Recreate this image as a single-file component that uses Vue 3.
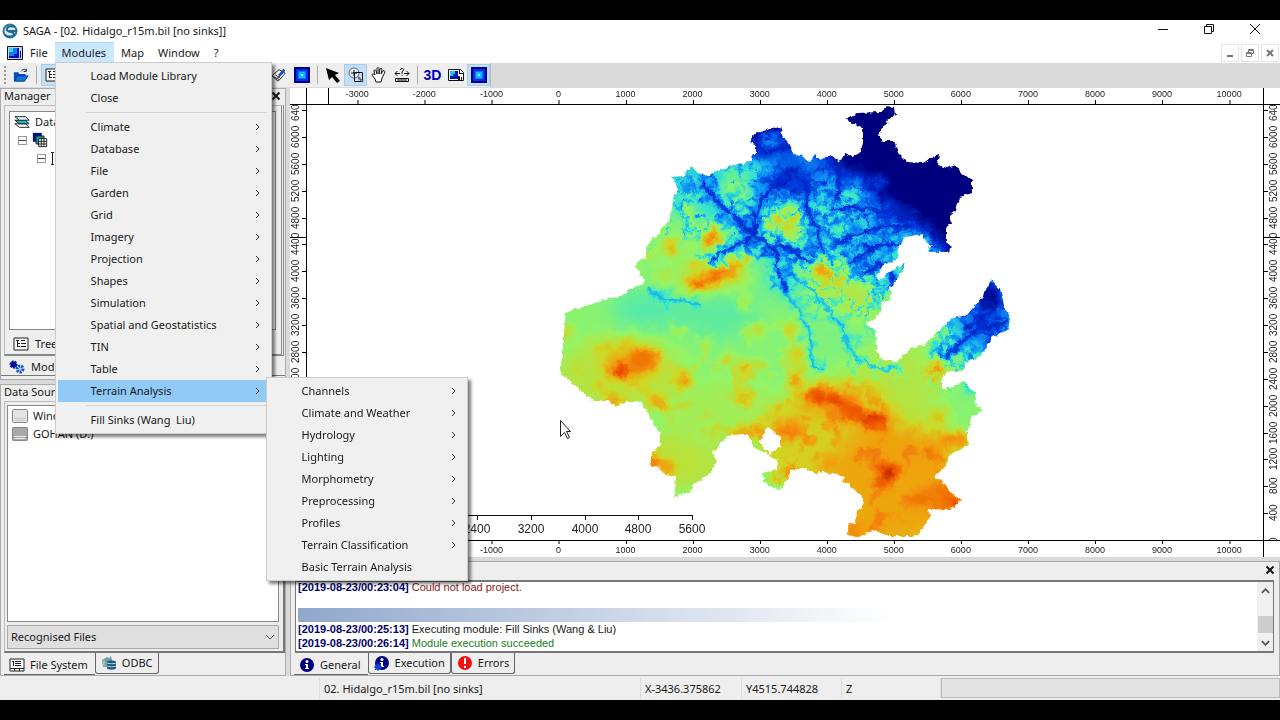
<template>
    <div class="screen">
        <svg class="defs" aria-hidden="true">
            <symbol id="grid-icon" viewBox="0 0 16 16">
                <path fill="#000080" d="M0 0h16v16H0z" />
                <path fill="#0030f0" d="M2 2h12v12H2z" />
                <path fill="#0878ff" d="M4 4h8v8H4z" />
                <path fill="#18b8ff" d="M5 5h6v6H5z" />
                <path fill="#90f0ff" d="M7 7h2v2H7z" />
            </symbol>
            <symbol id="map-icon" viewBox="0 0 16 14">
                <path fill="#c8d8e4" stroke="#101018" d="M.5.5h15v13H.5z" />
                <path fill="#0010c0" d="M2 2h10v10H2z" />
                <path fill="#1080f0" d="M2 2h8v6H7v2H2z" />
                <path fill="#40d0f0" d="M2 2h4v4H2z" />
                <path fill="#001090" d="M13 5h1v7h-1z" />
            </symbol>
            <symbol id="tree-icon" viewBox="0 0 16 14">
                <path fill="#f8f8f8" stroke="#202020" d="M1 1h14v12H1z" />
                <path fill="none" stroke="#202020" d="M3 3.5h3M4.500 4v6M5 6.500h2M5 9.500h2M8 3.500h4M8 6.500h5M8 9.500h5" />
            </symbol>
            <symbol id="file-icon" viewBox="0 0 16 14">
                <path fill="#fff" stroke="#202020" d="M1 1h14v12H1z" />
                <path fill="none" stroke="#202020" d="M3 3.500h2M6 3.500h6M4.500 4v4M6 5.500h6M6 7.500h6M1 10.500h14M5.500 10v3M10.500 10v3" />
            </symbol>
            <symbol id="info-icon" viewBox="0 0 16 16">
                <circle cx="8" cy="8" r="7" fill="#000080" />
                <circle cx="8" cy="4.500" r="1.500" fill="#fff" />
                <path fill="#fff" d="M6 7h3v4h1v1H6v-1h1V8H6z" />
            </symbol>
            <symbol id="close-icon" viewBox="0 0 10 10">
                <path fill="none" stroke="currentColor" stroke-width="2" d="M1.500 1.500l7 7M8.500 1.500l-7 7" />
            </symbol>
        </svg>

        <main class="window">
            <header class="title-bar">
                <svg class="logo" viewBox="0 0 16 16">
                    <circle cx="8" cy="8" r="6.500" fill="#d8ecf4" stroke="#2878a0" stroke-width="2" />
                    <path fill="none" stroke="#1c6890" stroke-width="2" d="M13 4C9 2 4 4 5 7s7 1 7 4-6 3-9 1M7 8h8" />
                </svg>
                <h1>SAGA - [02. Hidalgo_r15m.bil [no sinks]]</h1>
                <div class="window-buttons">
                    <button aria-label="Minimize">
                        <svg viewBox="0 0 12 12"><path d="M1 6.500h10" /></svg>
                    </button>
                    <button aria-label="Restore">
                        <svg viewBox="0 0 12 12"><path d="M1.500 3.500h7v7h-7zM3.500 3.500v-2h7v7h-2" /></svg>
                    </button>
                    <button aria-label="Close">
                        <svg viewBox="0 0 12 12"><path d="M1 1l10 10M11 1L1 11" /></svg>
                    </button>
                </div>
            </header>

            <nav class="menu-bar">
                <svg class="map-icon"><use href="#map-icon" /></svg>
                <div v-for="name in menus" :key="name" class="menu-entry">
                    <button class="menu-button" :class="{ open: openMenu === name }" @click="toggle(name)">
                        {{ name }}
                    </button>
                    <div v-if="name === 'Modules' && openMenu === name" class="menu modules-menu">
                        <template v-for="(item, i) in moduleItems" :key="i">
                            <hr v-if="item === '-'" />
                            <div v-else class="menu-row">
                                <button class="menu-item" :class="{ active: item === 'Terrain Analysis' }">
                                    {{ item }}
                                    <svg v-if="!plain.includes(item)" class="arrow" viewBox="0 0 6 8">
                                        <path d="M1 1l3 3-3 3" />
                                    </svg>
                                </button>
                                <div v-if="item === 'Terrain Analysis'" class="menu terrain-menu">
                                    <button v-for="sub in terrainItems" :key="sub" class="menu-item">
                                        {{ sub }}
                                        <svg v-if="!plain.includes(sub)" class="arrow" viewBox="0 0 6 8">
                                            <path d="M1 1l3 3-3 3" />
                                        </svg>
                                    </button>
                                </div>
                            </div>
                        </template>
                    </div>
                </div>
                <div class="mdi-buttons">
                    <button aria-label="Minimize map">
                        <svg viewBox="0 0 10 10"><path d="M2 8h6" /></svg>
                    </button>
                    <button aria-label="Restore map">
                        <svg viewBox="0 0 10 10"><path class="thin" d="M1.500 4.500h5v4h-5zM3.500 4V1.500h5v4H7M3 2.500h6M1 5.500h6" /></svg>
                    </button>
                    <button aria-label="Close map">
                        <svg viewBox="0 0 10 10"><path d="M2 2l6 6M8 2L2 8" /></svg>
                    </button>
                </div>
            </nav>

            <div class="toolbar">
                <div class="tools">
                    <span class="grip"></span>
                    <button aria-label="Open">
                        <svg viewBox="0 0 18 16">
                            <path fill="#0050b8" d="M1 5h5l1 2h7v2H5l-3 6H1z" />
                            <path fill="#1870e0" stroke="#003888" d="M5 9h12l-4 6H2z" />
                            <path fill="none" stroke="#102050" d="M9 4c2-3 4-3 6-1m0-2v3h-3" />
                        </svg>
                    </button>
                    <span class="divider"></span>
                    <button class="pressed" aria-label="Show manager">
                        <svg viewBox="0 0 16 14"><use href="#tree-icon" /></svg>
                    </button>
                    <span class="hidden-tools"></span>
                    <button aria-label="Edit">
                        <svg viewBox="0 0 18 16">
                            <path fill="#fff" stroke="#111" d="M1 9l8-7 7 4-8 9z" />
                            <path fill="none" stroke="#111" d="M3 10l6 3M5 8l5 3M6 13l9-9" />
                            <path fill="none" stroke="#2050c0" stroke-width="3" d="M15 2L9 9" />
                        </svg>
                    </button>
                    <button aria-label="Grid"><svg viewBox="0 0 16 16"><use href="#grid-icon" /></svg></button>
                    <span class="divider wide"></span>
                    <button aria-label="Pointer">
                        <svg viewBox="0 0 16 16"><path d="M1 1l3 12 3-3 5 6 3-2-5-6 4-2z" /></svg>
                    </button>
                    <button class="pressed" aria-label="Zoom">
                        <svg viewBox="0 0 16 16">
                            <circle cx="6" cy="6" r="5" fill="#e4f2fb" stroke="#667" />
                            <path fill="none" stroke="#111" d="M6 3v6M3 6h6M6.500 5.500h8v9h-8z" />
                            <path stroke="#667" stroke-width="2" d="M10 10l5 5" />
                        </svg>
                    </button>
                    <button aria-label="Pan">
                        <svg viewBox="0 0 16 16">
                            <path fill="#fff" stroke="#111" d="M5 15l-1-3-3-4c0-2 2-1 3 0L3 4c0-2 2-1 2 0l1 3V2c0-2 2-2 2 0v5l1-5c1-1 2-1 2 1l-1 4 2-3c1-1 2 0 2 1l-3 6-1 4z" />
                        </svg>
                    </button>
                    <button aria-label="Measure">
                        <svg viewBox="0 0 16 16">
                            <path fill="none" stroke="#111" d="M1 6.500h5M3.500 4L1 6.500 3.500 9M10 6.500h5M12.500 4L15 6.500 12.500 9M6.500 3c0-2 4-2 3 0L8 5v2M8 8v1M1.500 11.500h13v3h-13zM4 12v2M6 12v2M8 12v2M10 12v2M12 12v2" />
                        </svg>
                    </button>
                    <span class="divider wide"></span>
                    <button class="three-d">3D</button>
                    <button aria-label="Layout">
                        <svg viewBox="0 0 16 16">
                            <path fill="#fff" stroke="#111" d="M.5 2.500h12l3 3v8H.5z" />
                            <path fill="#0018c0" d="M2 4h8v8H2z" />
                            <path fill="#20c8e8" d="M2 4h5v3H5v2H2z" />
                            <path fill="#111" d="M11 3v4h4V6h-3V3zM10 9h2v4h-2zM13 10h1v3h-1z" />
                        </svg>
                    </button>
                    <button class="pressed" aria-label="Show map"><svg viewBox="0 0 16 16"><use href="#grid-icon" /></svg></button>
                </div>
            </div>

            <div class="workspace">
                <aside class="sidebar">
                    <section class="panel manager">
                        <h2>Manager <button aria-label="Close manager"><svg><use href="#close-icon" /></svg></button></h2>
                        <div class="frame">
                            <div class="tree">
                                <div class="tree-row">
                                    <svg viewBox="0 0 18 16">
                                        <path fill="#fff" stroke="#111" d="M1 10h12l4 4H6z" />
                                        <path fill="#20b8d0" stroke="#111" d="M1 6h12l4 4H6z" />
                                        <path fill="#d8f8ff" stroke="#111" d="M1 2h12l4 4H6z" />
                                    </svg>
                                    Data
                                </div>
                                <div class="tree-row second">
                                    <span class="toggle"></span>
                                    <svg viewBox="0 0 18 16">
                                        <path fill="#001088" d="M1 0h10v10H1z" />
                                        <path fill="#209898" stroke="#023" d="M4.500 3.500h9v9h-9z" />
                                        <path fill="#fff" stroke="#111" d="M7.500 6.500h9v9h-9zM10.500 6v9M13.500 6v9M7 9.500h9M7 12.500h9" />
                                    </svg>
                                </div>
                                <div class="tree-row third"><span class="toggle"></span><span class="stem"></span></div>
                            </div>
                            <button class="inner-tab"><svg><use href="#tree-icon" /></svg>Tree</button>
                        </div>
                        <button class="inner-tab modules-tab">
                            <svg viewBox="0 0 16 14">
                                <circle cx="4.500" cy="4.500" r="3" fill="#0010a0" stroke="#0010a0" stroke-width="2" stroke-dasharray="2 1" />
                                <circle cx="11" cy="9" r="3" fill="#a8d0f8" stroke="#1850b8" stroke-width="3" stroke-dasharray="2 1" />
                            </svg>
                            Modules
                        </button>
                    </section>

                    <section class="panel source">
                        <h2>Data Source</h2>
                        <div class="frame">
                            <div class="drives">
                                <div v-for="drive in drives" :key="drive.name" class="drive">
                                    <svg viewBox="0 0 16 14">
                                        <rect x=".5" y=".5" width="15" height="13" rx="1" :fill="drive.fill" stroke="#858585" />
                                        <path :stroke="drive.line" d="M2 9.500h12M3 11.500h10" />
                                    </svg>
                                    {{ drive.name }}
                                </div>
                            </div>
                            <div class="select-box">
                                <select aria-label="File filter"><option>Recognised Files</option></select>
                                <svg viewBox="0 0 10 6"><path d="M1 1l4 4 4-4" /></svg>
                            </div>
                        </div>
                        <div class="tabs">
                            <button class="tab current"><svg><use href="#file-icon" /></svg>File System</button>
                            <button class="tab">
                                <svg viewBox="0 0 16 14">
                                    <path fill="#70a0a8" d="M1 4l5-3 2 1 2-2 1 4v7H2z" />
                                    <path fill="#185878" d="M6 6c0-2 9-2 9 0v6c0 2-9 2-9 0z" />
                                    <path fill="none" stroke="#b8d8e8" d="M6 7c2 1 7 1 9 0M6 10c2 1 7 1 9 0M3 4v6" />
                                </svg>
                                ODBC
                            </button>
                        </div>
                    </section>
                </aside>

                <div class="content">
                    <section class="map">
                        <div v-for="side in ['top', 'bottom']" :key="side" class="ruler-x" :class="side">
                            <span v-for="t in xTicks" :key="t.label" class="tick" :style="{ left: t.pos + '%' }">{{ t.label }}</span>
                            <span v-if="side === 'top'" class="marker-x" :style="{ left: cursor.x + '%' }"></span>
                        </div>
                        <div v-for="side in ['left', 'right']" :key="side" class="ruler-y" :class="side">
                            <span v-for="t in yTicks" :key="t.label" class="tick" :style="{ top: t.pos + '%' }"><b>{{ t.label }}</b></span>
                            <span class="marker-y" :style="{ top: cursor.y + '%' }"></span>
                        </div>
                        <svg class="terrain" viewBox="307 105 956 435">
                            <defs>
                                <clipPath id="outline"><path :d="outline" clip-rule="evenodd" /></clipPath>
                                <filter id="soft" x="-50%" y="-50%" width="200%" height="200%" color-interpolation-filters="sRGB">
                                    <feGaussianBlur stdDeviation="9" />
                                </filter>
                                <filter id="spot" x="-50%" y="-50%" width="200%" height="200%" color-interpolation-filters="sRGB">
                                    <feGaussianBlur stdDeviation="4" />
                                </filter>
                                <filter id="river" x="-20%" y="-20%" width="140%" height="140%" color-interpolation-filters="sRGB">
                                    <feGaussianBlur stdDeviation=".9" />
                                </filter>
                                <filter id="rough" filterUnits="userSpaceOnUse" x="540" y="100" width="490" height="445">
                                    <feTurbulence type="fractalNoise" baseFrequency=".22" numOctaves="2" seed="8" result="n" />
                                    <feDisplacementMap in="SourceGraphic" in2="n" scale="5" xChannelSelector="R" yChannelSelector="G" />
                                </filter>
                                <!-- valleys: creases of the turbulence become dark lines -->
                                <filter id="valleys" x="0" y="0" width="100%" height="100%" color-interpolation-filters="sRGB">
                                    <feTurbulence type="turbulence" baseFrequency=".06" numOctaves="3" seed="14" />
                                    <feColorMatrix values="0 0 0 0 0  0 0 0 0 0  0 0 0 0 0  -2 0 0 0 .5" />
                                </filter>
                                <filter id="hills" x="0" y="0" width="100%" height="100%" color-interpolation-filters="sRGB">
                                    <feTurbulence type="fractalNoise" baseFrequency=".045" numOctaves="5" seed="5" />
                                    <feColorMatrix values="0 0 0 0 .85  0 0 0 0 .85  0 0 0 0 .85  5 0 0 0 -2.700" />
                                </filter>
                                <!-- grey height to colour ramp -->
                                <filter id="ramp" filterUnits="userSpaceOnUse" x="540" y="100" width="490" height="445" color-interpolation-filters="sRGB">
                                    <feTurbulence type="fractalNoise" baseFrequency=".08" numOctaves="3" seed="3" result="n" />
                                    <feDisplacementMap in="SourceGraphic" in2="n" scale="12" xChannelSelector="R" yChannelSelector="G" />
                                    <feComponentTransfer>
                                        <feFuncR type="table" tableValues="0 0 .05 .22 .58 .82 .95 .94 .7" />
                                        <feFuncG type="table" tableValues="0 .2 .6 .9 .96 .84 .62 .34 .08" />
                                        <feFuncB type="table" tableValues=".5 .85 .98 .8 .4 .14 .05 0 0" />
                                    </feComponentTransfer>
                                </filter>
                                <mask id="north" maskUnits="userSpaceOnUse" x="500" y="60" width="560" height="520">
                                    <g filter="url(#soft)" fill="#fff">
                                        <path d="M650 100h340v160l-90 50-20 20-70-20-50-50-40-20-80 10z" />
                                        <path d="M930 390v-70l50-70 50 70-40 70z" />
                                    </g>
                                </mask>
                                <mask id="south" maskUnits="userSpaceOnUse" x="500" y="60" width="560" height="520">
                                    <g filter="url(#soft)" fill="#fff">
                                        <path d="M770 375l60-10 120 70 30 120H830l-70-80-60-20z" />
                                        <path fill="#777" d="M650 330h140v110h-140zM640 200h90v80h-90zM580 340h70v60h-70z" />
                                    </g>
                                </mask>
                            </defs>
                            <g filter="url(#rough)">
                                <g clip-path="url(#outline)">
                                    <g filter="url(#ramp)">
                                        <rect x="500" y="60" width="560" height="520" fill="#7c7c7c" />
                                        <g filter="url(#soft)">
                                            <ellipse v-for="(a, i) in areas" :key="i" :cx="a[0]" :cy="a[1]" :rx="a[2]" :ry="a[3]" :fill="grey(a[4])" />
                                            <path fill="#000" d="M738 110h58v42l30 8 15 17 25-2-5 20 25 5 5 22 30 8 20 30h60V80H830v65l-30 10-60 5z" />
                                        </g>
                                        <g filter="url(#spot)">
                                            <path v-for="r in deepRivers" :key="r.d" class="flood" :d="r.d" />
                                            <ellipse v-for="(s, i) in spots" :key="i" :cx="s[0]" :cy="s[1]" :rx="s[2]" :ry="s[3]" :fill="grey(s[4])" />
                                        </g>
                                        <rect x="540" y="100" width="490" height="445" filter="url(#hills)" mask="url(#south)" opacity=".6" />
                                        <rect x="540" y="100" width="490" height="445" filter="url(#valleys)" mask="url(#north)" />
                                        <g class="rivers" filter="url(#river)">
                                            <template v-for="r in rivers" :key="r.d">
                                                <path :d="r.d" />
                                                <path class="side" :d="r.sides" />
                                            </template>
                                        </g>
                                        <g class="rivers deep" filter="url(#river)">
                                            <template v-for="r in deepRivers" :key="r.d">
                                                <path :d="r.d" />
                                                <path class="side" :d="r.sides" />
                                            </template>
                                        </g>
                                    </g>
                                </g>
                            </g>
                            <g class="scale">
                                <path d="M307 515.500h385.500M477.500 515v5M531.500 515v5M585.500 515v5M638.500 515v5M692.500 515v5" />
                                <text v-for="s in scale" :key="s[1]" :x="s[0]" y="533">{{ s[1] }}</text>
                            </g>
                            <path class="pointer" d="M560.500 420.500v16l4-4 3 6 2-1-3-6h4z" />
                        </svg>
                    </section>

                    <section class="panel messages">
                        <h2><button aria-label="Close messages"><svg><use href="#close-icon" /></svg></button></h2>
                        <div class="log">
                            <div class="lines">
                                <p><b>[2019-08-23/00:23:04]</b> <span class="error">Could not load project.</span></p>
                                <div class="band"></div>
                                <p><b>[2019-08-23/00:25:13]</b> Executing module: Fill Sinks (Wang &amp; Liu)</p>
                                <p><b>[2019-08-23/00:26:14]</b> <span class="success">Module execution succeeded</span></p>
                            </div>
                            <div class="scrollbar">
                                <svg viewBox="0 0 10 6"><path d="M1 5l4-4 4 4" /></svg>
                                <span class="thumb"></span>
                                <svg viewBox="0 0 10 6"><path d="M1 1l4 4 4-4" /></svg>
                            </div>
                        </div>
                        <div class="tabs">
                            <button class="tab current"><svg><use href="#info-icon" /></svg>General</button>
                            <button class="tab">
                                <svg viewBox="0 0 16 16">
                                    <use href="#info-icon" />
                                    <circle cx="4" cy="12" r="2" fill="#d0e8ff" stroke="#1040d0" stroke-width="2" />
                                    <path stroke="#1040d0" d="M4 8v8M0 12h8M1 9l6 6M7 9l-6 6" />
                                </svg>
                                Execution
                            </button>
                            <button class="tab">
                                <svg viewBox="0 0 16 16">
                                    <circle cx="8" cy="8" r="7" fill="#f01010" />
                                    <path fill="#fff" d="M7 3h2v6H7zM7 11h2v2H7z" />
                                </svg>
                                Errors
                            </button>
                        </div>
                    </section>
                </div>
            </div>

            <footer class="status-bar">
                <span></span>
                <span>02. Hidalgo_r15m.bil [no sinks]</span>
                <span>X-3436.375862</span>
                <span>Y4515.744828</span>
                <span>Z</span>
                <span class="progress"></span>
            </footer>
        </main>
    </div>
</template>
<script setup>
import { ref } from 'vue';

const menus = ['File', 'Modules', 'Map', 'Window', '?'];
const openMenu = ref('Modules');

const moduleItems = [
    'Load Module Library', 'Close', '-',
    'Climate', 'Database', 'File', 'Garden', 'Grid', 'Imagery', 'Projection', 'Shapes',
    'Simulation', 'Spatial and Geostatistics', 'TIN', 'Table', 'Terrain Analysis', '-',
    'Fill Sinks (Wang  Liu)',
];
const terrainItems = [
    'Channels', 'Climate and Weather', 'Hydrology', 'Lighting', 'Morphometry',
    'Preprocessing', 'Profiles', 'Terrain Classification', 'Basic Terrain Analysis',
];
// entries without a submenu
const plain = ['Load Module Library', 'Close', 'Fill Sinks (Wang  Liu)', 'Basic Terrain Analysis'];

const drives = [
    { name: 'Windows (C:)', fill: '#e4e4e4', line: '#c8c8c8' },
    { name: 'GOHAN (D:)', fill: '#a8a8a8', line: '#eeeeee' },
];

function toggle(name) {
    openMenu.value = openMenu.value === name ? '' : name;
}

// rulers, in percent of the map extent
const extent = { left: -3750, right: 10505, bottom: 0, top: 6475 };
const xTicks = [];
for (let v = -3000; v <= 10000; v += 1000) {
    xTicks.push({ label: v, pos: ((v - extent.left) / (extent.right - extent.left)) * 100 });
}
const yTicks = [];
for (let v = 0; v <= 6400; v += 400) {
    yTicks.push({ label: v, pos: ((extent.top - v) / extent.top) * 100 });
}
const cursor = {
    x: ((-3436 - extent.left) / (extent.right - extent.left)) * 100,
    y: ((extent.top - 4515) / extent.top) * 100,
};

const scale = [[477, 2400], [531, 3200], [585, 4000], [638, 4800], [692, 5600]];

const outline = `M566 312L592 304 612 297 618 298 630 289 645 283 641 275 635 267 637 262 645 259 647 247 652 239
658 235 662 227 668 222 672 212 673 198 678 190 675 182 671 177 683 176 687 170 692 166 698 172 707 176 723 169
737 164 750 162 755 153 755 145 750 143 755 133 763 131 780 127 783 137 789 143 795 155 802 156 810 162 815 155
820 160 830 155 840 162 845 153 852 156 860 153 863 143 863 129 855 124 845 119 857 113 880 112 887 106 894 107
895 115 888 120 878 135 883 141 894 141 898 153 907 162 923 163 932 157 940 155 938 165 947 168 956 165 962 174
972 180 972 193 960 197 956 210 950 215 952 223 946 227 946 242 952 247 947 252 930 252 928 248 933 247 925 240
923 234 905 237 898 247 897 260 883 265 877 277 879 281 890 272 905 263 903 270 897 279 890 287 891 299 882 303
880 315 866 323 875 332 877 352 883 360 897 362 912 347 923 346 933 337 947 323 953 318 967 315 982 297 991 280
1002 292 1004 307 1011 318 1008 330 993 337 980 357 965 363 963 371 947 371 941 380 943 389 953 387 963 381
975 393 977 407 983 410 972 417 967 433 968 447 950 454 945 467 933 478 943 480 950 492 961 500 950 510 928 509
930 517 917 536 890 536 880 533 876 530 867 533 858 538 847 535 847 525 856 523 857 510 863 508 863 498 847 483
842 483 845 477 823 472 815 473 803 468 790 470 788 478 780 491 763 482 763 473 777 469 778 460 753 447 750 437
743 434 727 436 713 453 716 460 712 472 693 485 690 492 674 497 676 477 665 475 658 467 651 465 652 452 660 445
660 433 643 406 642 402 627 402 615 407 610 401 593 401 577 388 563 375 560 377z
M768 427L780 437 780 447 770 454 763 447 760 440z`;

// cx, cy, rx, ry, height from 0 to 1
const areas = [
    [705, 190, 45, 35, 0.32], [740, 190, 30, 25, 0.36], [825, 205, 65, 60, 0.28], [770, 235, 40, 30, 0.38],
    [860, 260, 45, 35, 0.38], [790, 275, 40, 30, 0.44], [650, 310, 40, 20, 0.42], [720, 315, 40, 25, 0.43],
    [735, 195, 14, 24, 0.52], [785, 225, 24, 24, 0.56], [690, 255, 35, 38, 0.5], [715, 275, 35, 15, 0.6],
    [830, 280, 25, 20, 0.6], [860, 300, 20, 20, 0.56], [825, 335, 45, 22, 0.47], [620, 375, 65, 38, 0.57],
    [630, 362, 28, 20, 0.7], [680, 460, 40, 30, 0.58], [725, 415, 60, 35, 0.53], [820, 440, 60, 50, 0.64],
    [900, 375, 50, 30, 0.56], [915, 410, 25, 25, 0.56], [890, 490, 70, 60, 0.73], [830, 398, 35, 14, 0.76],
    [870, 418, 30, 14, 0.76], [985, 315, 35, 40, 0.22], [945, 350, 26, 18, 0.5], [910, 455, 45, 28, 0.74],
    [838, 212, 30, 26, 0.44], [850, 240, 32, 18, 0.42], [790, 180, 30, 16, 0.12], [690, 210, 10, 30, 0.48],
];
const spots = [
    [713, 237, 6, 14, 0.84], [671, 249, 9, 5, 0.8], [700, 284, 12, 5, 0.92], [716, 276, 8, 6, 0.9],
    [730, 270, 10, 6, 0.8], [742, 258, 5, 8, 0.8], [822, 266, 6, 8, 0.8], [830, 275, 7, 5, 0.76],
    [780, 222, 14, 8, 0.66], [790, 215, 12, 6, 0.64],
    [620, 371, 9, 8, 0.94], [642, 360, 13, 12, 0.82], [683, 380, 6, 10, 0.8], [745, 367, 9, 4, 0.78],
    [727, 360, 4, 5, 0.74], [740, 397, 10, 4, 0.7], [795, 380, 7, 10, 0.78], [820, 396, 14, 6, 0.92],
    [836, 402, 14, 6, 0.92], [853, 412, 12, 6, 0.9], [874, 420, 14, 7, 0.94], [788, 430, 18, 9, 0.8],
    [748, 432, 18, 6, 0.76], [655, 463, 8, 8, 0.84], [669, 468, 7, 7, 0.76], [888, 472, 10, 8, 0.98],
    [880, 485, 8, 4, 0.94], [951, 502, 12, 7, 1], [935, 370, 7, 9, 0.82], [935, 498, 18, 14, 0.8],
    [855, 530, 8, 8, 0.8], [915, 500, 12, 8, 0.82], [615, 402, 12, 5, 0.76], [955, 440, 18, 9, 0.78],
    [940, 417, 10, 6, 0.7], [658, 402, 8, 7, 0.74], [829, 461, 7, 6, 0.78], [566, 332, 5, 5, 0.72],
    [771, 140, 13, 7, 0.26], [750, 145, 3, 3, 0.34], [968, 387, 6, 6, 0.4], [850, 198, 10, 5, 0.42],
    [878, 182, 8, 4, 0.26], [792, 330, 4, 10, 0.74], [798, 355, 4, 12, 0.74], [990, 295, 10, 14, 0.03],
    [757, 330, 8, 4, 0.7], [745, 303, 3, 8, 0.68],
];

// a small fixed-seed generator keeps the drainage pattern the same on every load
let seed = 7;
function random() {
    seed = (seed * 16807) % 2147483647;
    return seed / 2147483647;
}

function tributary(x, y, angle, length, depth) {
    let d = `M${x.toFixed(1)} ${y.toFixed(1)}`;
    let more = '';
    let a = angle;
    const steps = Math.ceil(length / 3);
    for (let i = 0; i < steps; i++) {
        a += (random() - 0.5) * 0.7;
        x += Math.cos(a) * 3;
        y += Math.sin(a) * 3;
        d += `L${x.toFixed(1)} ${y.toFixed(1)}`;
        if (depth > 0 && i % 2 === 1) {
            const turn = i % 4 === 1 ? 0.8 : -0.8;
            more += tributary(x, y, a + turn, length * 0.4, depth - 1);
        }
    }
    return d + more;
}

// the points run from the mouth of a river to its source
function river(points, reach) {
    let sides = '';
    let side = 1;
    for (let i = 1; i < points.length; i++) {
        const [x0, y0] = points[i - 1];
        const [x1, y1] = points[i];
        const angle = Math.atan2(y1 - y0, x1 - x0);
        const count = Math.max(1, Math.round(Math.hypot(x1 - x0, y1 - y0) / 6));
        for (let k = 0; k < count; k++) {
            const f = (k + random()) / count;
            side = -side;
            sides += tributary(x0 + (x1 - x0) * f, y0 + (y1 - y0) * f, angle + side * 0.95, reach * (0.5 + random()), 1);
        }
    }
    return { d: 'M' + points.map((p) => p.join(' ')).join('L'), sides };
}

const rivers = [
    river([[787, 293], [803, 313], [808, 333], [811, 350], [813, 365], [822, 368]], 7),
    river([[785, 272], [807, 287], [827, 307], [843, 327], [850, 348], [868, 366], [885, 369], [900, 370]], 10),
    river([[645, 288], [660, 298], [680, 301], [700, 306]], 5),
];
const deepRivers = [
    river([[787, 293], [780, 267], [773, 247], [752, 235], [755, 215], [762, 195], [783, 180]], 15),
    river([[752, 233], [730, 213], [716, 200], [703, 182]], 13),
    river([[752, 237], [730, 250], [707, 263]], 10),
    river([[770, 246], [795, 250], [812, 262]], 10),
    river([[804, 175], [807, 207], [817, 233], [822, 253]], 15),
    river([[915, 212], [873, 210], [827, 208]], 12),
    river([[915, 226], [873, 228], [853, 235], [832, 245]], 12),
    river([[905, 243], [873, 247], [850, 264]], 13),
    river([[890, 290], [893, 275], [880, 262], [862, 272]], 8),
    river([[838, 165], [840, 187], [834, 198]], 10),
    river([[1008, 322], [977, 330], [962, 342], [946, 356]], 12),
    river([[998, 300], [985, 318], [966, 326]], 9),
];

function grey(v) {
    const n = Math.round(v * 255);
    return `rgb(${n}, ${n}, ${n})`;
}
</script>
<style>
body {
    margin: 0;
    background: #000;
}
</style>
<style scoped>
* {
    box-sizing: border-box;
}

.screen {
    min-height: 100vh;
    padding: 20px 0;
    display: flex;
    background: #000;
    color: #181818;
    font: 11px/16px 'Noto Sans', 'Open Sans', sans-serif;
}

.defs {
    position: absolute;
    width: 0;
    height: 0;
}

button {
    border: 0;
    padding: 0;
    background: none;
    color: inherit;
    font: inherit;
}

h1,
h2,
p {
    margin: 0;
    font: inherit;
}

.window {
    flex: 1;
    min-width: 0;
    display: flex;
    flex-direction: column;
    background: #fff;
}

.title-bar {
    height: 22px;
    display: flex;
    align-items: center;
    gap: 5px;
    padding-left: 2px;
}

.logo {
    width: 16px;
    height: 16px;
}

.window-buttons {
    display: flex;
    margin-left: auto;
    padding-right: 2px;
}

.window-buttons button {
    width: 46px;
    height: 20px;
}

.window-buttons svg {
    width: 12px;
    height: 12px;
    fill: none;
    stroke: #111;
}

.menu-bar {
    height: 21px;
    display: flex;
    align-items: center;
    padding-left: 7px;
}

.map-icon {
    width: 16px;
    height: 14px;
}

.menu-entry {
    position: relative;
}

.menu-button {
    height: 21px;
    padding: 0 7px;
    border: 1px solid transparent;
    border-width: 1px 0;
    white-space: nowrap;
}

.menu-button.open {
    padding: 0 8px 0 7px;
    background: #cce8ff;
    border-color: #a8d8f8;
}

.mdi-buttons {
    display: flex;
    gap: 2px;
    margin-left: auto;
    padding-right: 1px;
}

.mdi-buttons button {
    width: 18px;
    height: 18px;
    border: 1px solid #e4e4e4;
    display: grid;
    place-items: center;
}

.mdi-buttons svg {
    width: 10px;
    height: 10px;
    fill: none;
    stroke: #707880;
    stroke-width: 2;
}

.mdi-buttons .thin {
    stroke-width: 1;
}

.menu {
    position: absolute;
    z-index: 2;
    padding: 2px;
    background: #f0f0f0;
    border: 1px solid #ccc;
    box-shadow: 3px 3px 3px rgba(0, 0, 0, 0.5);
}

.modules-menu {
    top: 20px;
    left: 0;
    width: 217px;
}

.terrain-menu {
    top: -3px;
    left: 208px;
    width: 202px;
}

.menu-row {
    position: relative;
}

.menu-item {
    width: 100%;
    height: 22px;
    display: flex;
    align-items: center;
    justify-content: space-between;
    padding: 0 8px 0 33px;
    white-space: pre;
}

.menu-item.active {
    background: #91c9f7;
}

.menu hr {
    height: 1px;
    margin: 3px 2px 3px 28px;
    border: 0;
    background: #d4d4d4;
}

.arrow {
    width: 6px;
    height: 8px;
    fill: none;
    stroke: #333;
}

.toolbar {
    height: 25px;
    background: #dadada;
}

.tools {
    width: 491px;
    height: 24px;
    display: flex;
    align-items: center;
    background: #eee;
    border-right: 1px solid #bbb;
}

.tools button {
    width: 23px;
    height: 22px;
    display: grid;
    place-items: center;
}

.tools button.pressed {
    background: #c4dff5;
    outline: 1px solid #a4cdf0;
    outline-offset: -1px;
}

.tools svg {
    width: 16px;
    height: 16px;
}

.grip {
    width: 9px;
    height: 18px;
    border-left: 4px solid #eee;
    background: repeating-linear-gradient(#999 0 2px, #eee 2px 4px);
    border-right: 3px solid #eee;
}

.divider {
    width: 1px;
    height: 18px;
    margin: 0 4px;
    background: #aaa;
}

.divider.wide {
    margin: 0 3px 0 4px;
}

.hidden-tools {
    flex: 1;
}

.tools .three-d {
    color: #0000c0;
    font: bold 14px/16px 'Liberation Sans', sans-serif;
}

.workspace {
    flex: 1;
    display: flex;
    background: #dadada;
}

.sidebar {
    width: 286px;
    display: flex;
    flex-direction: column;
    gap: 4px;
}

.panel {
    display: flex;
    flex-direction: column;
    background: #eee;
    border: 1px solid #aaa;
}

.panel h2 {
    height: 13px;
    display: flex;
    justify-content: space-between;
    align-items: center;
    padding: 0 4px 0 3px;
}

.panel h2 button {
    width: 10px;
    height: 13px;
    margin-left: auto;
    display: flex;
    align-items: center;
}

.panel h2 svg {
    width: 10px;
    height: 10px;
}

.manager {
    height: 292px;
}

.manager .frame {
    flex: 1;
    display: flex;
    flex-direction: column;
    margin: 3px 1px 0 3px;
    padding: 5px 5px 0 4px;
    border: 1px solid #bbb;
    border-right: 3px double #888;
    border-bottom: 2px solid #888;
}

.tree {
    flex: 1;
    padding: 1px 4px;
    background: #fff;
    border: 1px solid #888;
}

.tree-row {
    height: 18px;
    display: flex;
    align-items: center;
    gap: 5px;
}

.tree-row svg {
    width: 16px;
    height: 16px;
}

.second {
    padding-left: 4px;
}

.third {
    padding-left: 23px;
}

.toggle {
    width: 9px;
    height: 9px;
    border: 1px solid #999;
    background: linear-gradient(#0000 3px, #345 3px 4px, #0000 4px);
}

.stem {
    width: 3px;
    height: 13px;
    border: 1px solid #222;
    border-width: 1px 0;
    background: linear-gradient(90deg, #0000 1px, #222 1px 2px, #0000 2px);
}

.inner-tab {
    height: 24px;
    display: flex;
    align-items: center;
    gap: 6px;
    padding: 4px 0 0 4px;
    text-align: left;
}

.inner-tab svg {
    width: 16px;
    height: 14px;
}

.modules-tab {
    height: 20px;
    padding: 2px 0 0 8px;
    margin-bottom: 3px;
    border-bottom: 1px solid #777;
}

.source {
    flex: 1;
}

.source .frame {
    flex: 1;
    display: flex;
    flex-direction: column;
    gap: 3px;
    margin: 3px 0 0 3px;
    padding: 3px 4px 2px 2px;
    border: 1px solid #bbb;
    border-right: 2px solid #777;
    border-bottom: 2px solid #777;
}

.drives {
    flex: 1;
    padding: 1px 4px;
    background: #fff;
    border: 1px solid #888;
}

.drive {
    height: 18px;
    display: flex;
    align-items: center;
    gap: 5px;
}

.drive svg {
    width: 16px;
    height: 14px;
}

.select-box {
    position: relative;
}

.select-box select {
    appearance: none;
    width: 100%;
    height: 24px;
    padding: 0 3px;
    border: 1px solid #aaa;
    border-radius: 0;
    background: #dfdfdf;
    color: inherit;
    font: inherit;
}

.select-box svg {
    position: absolute;
    top: 9px;
    right: 4px;
    width: 10px;
    height: 6px;
    fill: none;
    stroke: #555;
    pointer-events: none;
}

.tabs {
    height: 22px;
    display: flex;
    align-items: flex-start;
    padding-left: 3px;
}

.tab {
    height: 21px;
    display: flex;
    align-items: center;
    gap: 5px;
    padding: 0 5px;
    border: 1px solid #666;
    border-top: 0;
    border-radius: 0 0 3px 3px;
    white-space: nowrap;
}

.tab.current {
    height: 22px;
    padding: 2px 7px 0 5px;
    border-width: 0 0 1px;
    border-radius: 0;
}

.tab svg {
    width: 16px;
    height: 14px;
}

.content {
    flex: 1;
    min-width: 0;
    display: flex;
    flex-direction: column;
    gap: 4px;
    margin-left: 4px;
}

.map {
    flex: 1;
    display: grid;
    grid-template-columns: 17px 1fr 17px;
    grid-template-rows: 17px 1fr 17px;
    background: #fff;
    overflow: hidden;
    color: #222;
    font: 9px/10px 'Liberation Sans', sans-serif;
}

/* axis lines run on through the corners */
.map::before,
.map::after {
    content: '';
    border: solid #000;
    pointer-events: none;
}

.map::before {
    grid-area: 1 / 2 / 4 / 3;
    margin: 0 -1px;
    border-width: 0 1px;
}

.map::after {
    grid-area: 2 / 1 / 3 / 4;
    margin: -1px 0;
    border-width: 1px 0;
}

.terrain {
    grid-area: 2 / 2;
    width: 100%;
    height: 100%;
    min-height: 0;
}

.ruler-x,
.ruler-y {
    position: relative;
}

.top {
    grid-area: 1 / 2;
}

.bottom {
    grid-area: 3 / 2;
}

.left {
    grid-area: 2 / 1;
    overflow: hidden;
}

.right {
    grid-area: 2 / 3;
    overflow: hidden;
}

.ruler-x .tick {
    position: absolute;
    transform: translateX(-50%);
}

.ruler-x .tick::after {
    content: '';
    position: absolute;
    left: 50%;
    width: 1px;
    height: 4px;
    background: #000;
}

.top .tick {
    bottom: 6px;
}

.top .tick::after {
    bottom: -5px;
}

.bottom .tick {
    top: 5px;
}

.bottom .tick::after {
    top: -5px;
}

.ruler-y .tick {
    position: absolute;
    width: 17px;
    height: 24px;
    transform: translateY(-50%);
    font-size: 10px;
}

.ruler-y .tick b {
    position: absolute;
    top: 0;
    height: 24px;
    writing-mode: vertical-rl;
    text-align: center;
    font-weight: normal;
    transform: rotate(180deg);
}

.ruler-y .tick::after {
    content: '';
    position: absolute;
    top: 12px;
    width: 5px;
    height: 1px;
    background: #000;
}

.left .tick b {
    left: 1px;
}

.left .tick::after {
    right: 0;
}

.right .tick b {
    right: 1px;
}

.right .tick::after {
    left: 0;
}

.marker-x {
    position: absolute;
    top: 0;
    bottom: 0;
    width: 1px;
    background: #000;
}

.marker-y {
    position: absolute;
    left: 0;
    right: 0;
    height: 1px;
    background: #000;
}

.rivers {
    fill: none;
    stroke: #444;
    stroke-width: 3;
}

.rivers .side {
    stroke-width: 1;
    opacity: 0.8;
}

.deep {
    stroke: #161616;
}

.deep .side {
    stroke-width: 2;
    opacity: 0.6;
}

.flood {
    fill: none;
    stroke: #282828;
    stroke-width: 9;
    opacity: 0.6;
}

.scale path {
    fill: none;
    stroke: #111;
}

.scale text {
    font: 12px 'Liberation Sans', sans-serif;
    text-anchor: middle;
    fill: #222;
}

.pointer {
    fill: #fff;
    stroke: #222;
}

.messages h2 {
    height: 18px;
}

.messages h2 button {
    height: 15px;
    align-self: flex-start;
}

.log {
    height: 73px;
    display: flex;
    margin: 0 5px 0 4px;
    padding-left: 2px;
    background: #fff;
    border: solid #777;
    border-width: 2px 1px 2px 1px;
}

.lines {
    flex: 1;
    min-width: 0;
    display: flex;
    flex-direction: column;
    justify-content: flex-end;
    padding-bottom: 1px;
    overflow: hidden;
    font: 11px/14px 'Liberation Sans', sans-serif;
}

.lines p {
    height: 14px;
    flex: none;
    white-space: nowrap;
}

.lines b {
    color: #000070;
}

.error {
    color: #901818;
}

.success {
    color: #188018;
}

.band {
    flex: none;
    width: 62%;
    height: 14px;
    margin-top: 14px;
    background: linear-gradient(90deg, #90a8cc, #fff);
}

.scrollbar {
    width: 16px;
    display: flex;
    flex-direction: column;
    align-items: center;
    padding: 6px 0 5px;
    background: #f0f0f0;
}

.scrollbar svg {
    width: 9px;
    height: 6px;
    fill: none;
    stroke: #555;
    stroke-width: 2;
}

.thumb {
    width: 15px;
    height: 17px;
    margin: auto 0 7px;
    background: #cdcdcd;
}

.messages .tab svg {
    height: 16px;
}

.status-bar {
    height: 24px;
    display: grid;
    grid-template-columns: 320fr 321fr 101fr 100fr 99fr 339fr;
    align-items: center;
    background: #eee;
}

.status-bar span {
    height: 20px;
    padding: 3px 4px 1px;
    border-right: 1px solid #ddd;
    white-space: nowrap;
}

.status-bar .progress {
    background: #e4e4e4;
    border: 1px solid #bbb;
}
</style>
